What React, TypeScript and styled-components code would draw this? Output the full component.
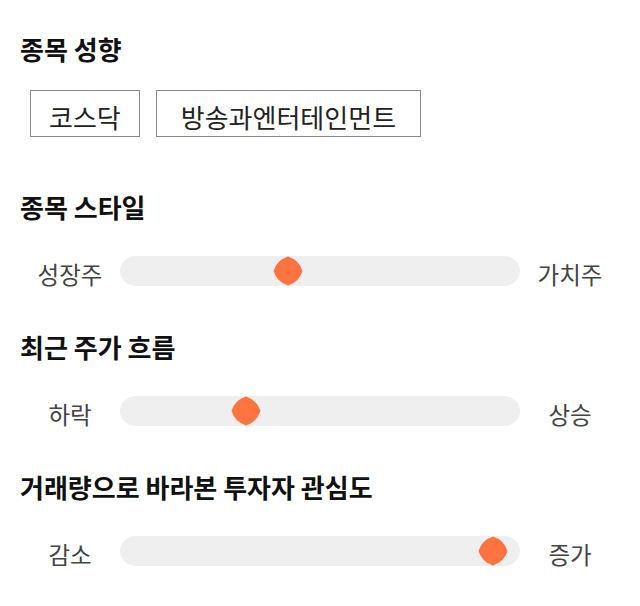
import React from 'react';
import styled, { createGlobalStyle } from 'styled-components';

const GlobalStyle = createGlobalStyle`
  html, body {
    margin: 0;
    padding: 0;
    background: #ffffff;
  }
  body {
    font-family: "Noto Sans CJK KR", "Noto Sans", sans-serif;
    color: #111111;
  }
`;

const Page = styled.main`
  width: 640px;
  box-sizing: border-box;
  padding: 31px 20px 0;
  display: flex;
  flex-direction: column;
`;

const Section = styled.section<{ $gap: number }>`
  display: flex;
  flex-direction: column;
  margin-bottom: ${({ $gap }) => $gap}px;
`;

const Heading = styled.h2`
  margin: 0;
  font-size: 26px;
  line-height: 36px;
  font-weight: 700;
  color: #111111;
`;

const TagRow = styled.div`
  display: flex;
  gap: 16px;
  margin-top: 23px;
  padding-left: 10px;
`;

const Tag = styled.button<{ $px: number }>`
  box-sizing: border-box;
  height: 47px;
  padding: 8px ${({ $px }) => $px}px 1px;
  border: 1px solid #888888;
  border-radius: 0;
  background: #ffffff;
  font-family: inherit;
  font-size: 26px;
  line-height: 36px;
  color: #222222;
  cursor: pointer;
`;

const SliderRow = styled.div`
  display: grid;
  grid-template-columns: 100px 1fr 100px;
  align-items: center;
  margin-top: 28px;
  height: 30px;
`;

const Label = styled.span`
  margin-top: 6px;
  text-align: center;
  font-size: 23.5px;
  line-height: 30px;
  color: #444444;
`;

const Track = styled.div`
  position: relative;
  height: 30px;
  border-radius: 16px / 15px;
  background: #efefef;
`;

const Thumb = styled.svg`
  position: absolute;
  top: 0;
  width: 30px;
  height: 30px;
  margin-left: -15px;
`;

const ThumbShape = () => (
  <path
    d="M15 0.5 Q26 4 29.5 15 Q26 26 15 29.5 Q4 26 0.5 15 Q4 4 15 0.5 Z"
    fill="#ff7340"
  />
);

type Slider = {
  title: string;
  left: string;
  right: string;
  value: number;
};

const sliders: Slider[] = [
  { title: '종목 스타일', left: '성장주', right: '가치주', value: 0.414 },
  { title: '최근 주가 흐름', left: '하락', right: '상승', value: 0.3 },
  { title: '거래량으로 바라본 투자자 관심도', left: '감소', right: '증가', value: 0.968 },
];

const tags = [
  { name: '코스닥', px: 18 },
  { name: '방송과엔터테인먼트', px: 24 },
];

const App: React.FC = () => {
  return (
    <>
      <GlobalStyle />
      <Page>
        <Section $gap={52}>
          <Heading>종목 성향</Heading>
          <TagRow>
            {tags.map((tag) => (
              <Tag key={tag.name} $px={tag.px}>
                {tag.name}
              </Tag>
            ))}
          </TagRow>
        </Section>

        {sliders.map((s) => (
          <Section key={s.title} $gap={46}>
            <Heading>{s.title}</Heading>
            <SliderRow>
              <Label>{s.left}</Label>
              <Track>
                <Thumb
                  viewBox="0 0 30 30"
                  style={{ left: `calc(15px + (100% - 30px) * ${s.value})` }}
                >
                  <ThumbShape />
                </Thumb>
              </Track>
              <Label>{s.right}</Label>
            </SliderRow>
          </Section>
        ))}
      </Page>
    </>
  );
};

export default App;
